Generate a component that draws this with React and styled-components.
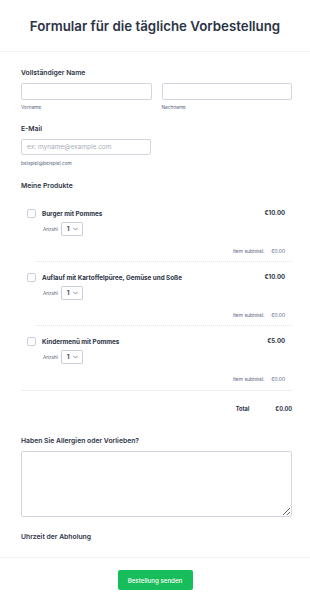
import React from "react"
import styled, {createGlobalStyle} from "styled-components"

const GlobalStyle = createGlobalStyle`
  html, body {
    margin: 0;
    padding: 0;
    background: #fff;
  }
  body {
    font-family: Inter, "Noto Sans", sans-serif;
    color: #2c3345;
  }
  * {
    box-sizing: border-box;
  }
`;

const Page = styled.div`
  width: 310px;
  height: 606px;
  display: flex;
  flex-direction: column;
  overflow: hidden;
`;

const Header = styled.header`
  height: 52px;
  flex-shrink: 0;
  display: flex;
  align-items: center;
  justify-content: center;
  border-bottom: 1px solid #f1f2f6;
  h1 {
    margin: 0;
    font-size: 13.3px;
    font-weight: 600;
    color: #2c3345;
  }
`;

const Body = styled.div`
  padding: 0 18px 0 21px;
  display: flex;
  flex-direction: column;
`;

const Label = styled.div`
  font-size: 6.8px;
  font-weight: 600;
  line-height: 10px;
  color: #2c3345;
  margin-top: ${p => p.$top}px;
`;

const Row = styled.div`
  display: flex;
  gap: 10px;
  margin-top: 5px;
`;

const Field = styled.div`
  flex: 1;
  display: flex;
  flex-direction: column;
`;

const Input = styled.input`
  width: ${p => p.$width || "100%"};
  height: ${p => p.$height || 17}px;
  border: 1px solid #d3d6df;
  border-radius: 2px;
  padding: 0 5px;
  font-family: Inter, sans-serif;
  font-size: 6.5px;
  color: #2c3345;
  outline: none;
  &::placeholder {
    color: #a8adb9;
  }
`;

const Sub = styled.div`
  font-size: 4.8px;
  line-height: 8px;
  color: #57647e;
  margin-top: ${p => p.$top || 3}px;
`;

const Products = styled.div`
  display: flex;
  flex-direction: column;
  margin-top: 18px;
`;

const Product = styled.div`
  display: flex;
  flex-direction: column;
  padding: 0 7px 0 6px;
`;

const ProductHead = styled.div`
  display: flex;
  align-items: flex-start;
  height: 10px;
`;

const Check = styled.span`
  width: 9px;
  height: 9px;
  border: 1px solid #c9cfdb;
  border-radius: 2px;
  background: #fff;
  flex-shrink: 0;
`;

const Name = styled.div`
  flex: 1;
  margin-left: 6px;
  font-size: 6.3px;
  font-weight: 700;
  line-height: 10px;
  color: #2c3345;
`;

const Price = styled.div`
  font-size: 6px;
  font-weight: 700;
  line-height: 8px;
  color: #2c3345;
`;

const Qty = styled.div`
  display: flex;
  align-items: center;
  gap: 3px;
  height: 14px;
  margin: 3px 0 0 16px;
`;

const QtyLabel = styled.span`
  font-size: 4.6px;
  color: #57647e;
`;

const SelectBox = styled.div`
  width: 22px;
  height: 14px;
  display: flex;
  align-items: center;
  justify-content: space-between;
  padding: 0 4px 0 5px;
  border: 1px solid #c9cfdb;
  border-radius: 2px;
  background: #fff;
  font-size: 6.5px;
  font-weight: 600;
  color: #2c3345;
`;

const Subtotal = styled.div`
  display: flex;
  justify-content: flex-end;
  gap: 7px;
  margin-top: 11px;
  font-size: 4.9px;
  line-height: 8px;
  color: #57647e;
`;

const Dotted = styled.div`
  margin: 6px 0 11px 14px;
  border-top: 1px dotted #dfe2ea;
`;

const Solid = styled.div`
  margin-top: 7px;
  border-top: 1px solid #eceef3;
`;

const TotalRow = styled.div`
  display: flex;
  justify-content: flex-end;
  margin-top: 13px;
  font-size: 5.6px;
  font-weight: 700;
  line-height: 10px;
  color: #2c3345;
  span:first-child {
    margin-right: 26px;
  }
`;

const TextArea = styled.textarea`
  display: block;
  margin-top: 5px;
  width: 271px;
  height: 66px;
  border: 1px solid #d3d6df;
  border-radius: 2px;
  font-family: Inter, sans-serif;
  font-size: 7px;
  outline: none;
`;

const Footer = styled.footer`
  border-top: 1px solid #f1f2f6;
  margin-top: 15px;
  display: flex;
  justify-content: center;
  padding-top: 12px;
`;

const Button = styled.button`
  width: 75px;
  height: 20px;
  border: none;
  border-radius: 2px;
  background: #18bd5b;
  color: #fff;
  font-family: Inter, sans-serif;
  font-size: 6.2px;
  font-weight: 500;
`;

const products = [
  {name: "Burger mit Pommes", price: "€10.00"},
  {name: "Auflauf mit Kartoffelpüree, Gemüse und Soße", price: "€10.00"},
  {name: "Kindermenü mit Pommes", price: "€5.00"},
];

const Chevron = () => (
  <svg width="5" height="4" viewBox="0 0 10 6" fill="none">
    <path d="M1 1l4 4 4-4" stroke="#57647e" strokeWidth="1.4" strokeLinecap="round" strokeLinejoin="round" />
  </svg>
);

const App = () => (
  <Page>
    <GlobalStyle />
    <Header>
      <h1>Formular für die tägliche Vorbestellung</h1>
    </Header>
    <Body>
      <Label $top={16}>Vollständiger Name</Label>
      <Row>
        <Field>
          <Input />
          <Sub>Vorname</Sub>
        </Field>
        <Field>
          <Input />
          <Sub>Nachname</Sub>
        </Field>
      </Row>

      <Label $top={13}>E-Mail</Label>
      <Row>
        <Input $width="130px" $height={16} placeholder="ex: myname@example.com" />
      </Row>
      <Sub $top={4}>beispiel@beispiel.com</Sub>

      <Label $top={14}>Meine Produkte</Label>
      <Products>
        {products.map((p, i) => (
          <React.Fragment key={p.name}>
            <Product>
              <ProductHead>
                <Check />
                <Name>{p.name}</Name>
                <Price>{p.price}</Price>
              </ProductHead>
              <Qty>
                <QtyLabel>Anzahl</QtyLabel>
                <SelectBox>
                  <span>1</span>
                  <Chevron />
                </SelectBox>
              </Qty>
              <Subtotal>
                <span>Item subtotal:</span>
                <span>€0.00</span>
              </Subtotal>
            </Product>
            {i < products.length - 1 ? <Dotted /> : <Solid />}
          </React.Fragment>
        ))}
      </Products>
      <TotalRow>
        <span>Total</span>
        <span>€0.00</span>
      </TotalRow>

      <Label $top={22}>Haben Sie Allergien oder Vorlieben?</Label>
      <TextArea />

      <Label $top={15}>Uhrzeit der Abholung</Label>
    </Body>
    <Footer>
      <Button>Bestellung senden</Button>
    </Footer>
  </Page>
)

export default App;
